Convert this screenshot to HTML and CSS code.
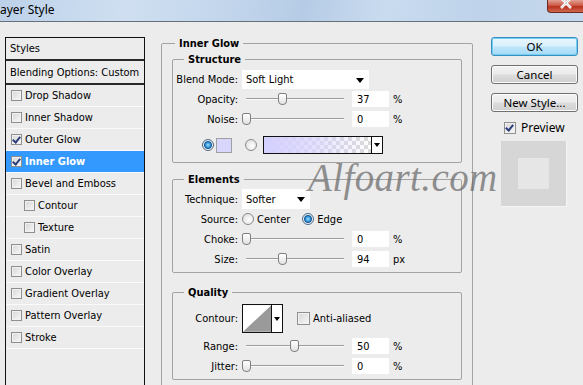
FILE: index.html
```html
<!DOCTYPE html>
<html lang="en">
<head>
    <meta charset="UTF-8">
    <title>Layer Style</title>
    <link rel="stylesheet" href="styles.css">
</head>
<body>
    <div class="window">
        <div class="titlebar">
            <span class="title">ayer Style</span>
            <span class="close">
                <svg width="12" height="9" viewBox="0 0 12 9"><path d="M1 -2 L11 8 M11 -2 L1 8" stroke="#fff" stroke-width="2.6"/><path d="M1 -2 L11 8 M11 -2 L1 8" stroke="#d8d8d8" stroke-width="1"/></svg>
            </span>
        </div>

        <div class="dialog">
            <div class="styles-panel">
                <div class="panel-head first">Styles</div>
                <div class="panel-head">Blending Options: Custom</div>
                <div class="style-item"><span class="cb"></span>Drop Shadow</div>
                <div class="style-item"><span class="cb"></span>Inner Shadow</div>
                <div class="style-item"><span class="cb checked"></span>Outer Glow</div>
                <div class="style-item active"><span class="cb checked"></span>Inner Glow</div>
                <div class="style-item"><span class="cb"></span>Bevel and Emboss</div>
                <div class="style-item sub"><span class="cb"></span>Contour</div>
                <div class="style-item sub"><span class="cb"></span>Texture</div>
                <div class="style-item"><span class="cb"></span>Satin</div>
                <div class="style-item"><span class="cb"></span>Color Overlay</div>
                <div class="style-item"><span class="cb"></span>Gradient Overlay</div>
                <div class="style-item"><span class="cb"></span>Pattern Overlay</div>
                <div class="style-item"><span class="cb"></span>Stroke</div>
            </div>

            <fieldset class="group outer">
                <legend>Inner Glow</legend>

                <fieldset class="group structure">
                    <legend>Structure</legend>
                    <div class="row tall">
                        <span class="label">Blend Mode:</span>
                        <div class="select wide">Soft Light<span class="arrow"></span></div>
                    </div>
                    <div class="row">
                        <span class="label">Opacity:</span>
                        <div class="slider"><span class="track"></span><span class="thumb" style="left: 36px"></span></div>
                        <span class="field">37</span><span class="unit">%</span>
                    </div>
                    <div class="row">
                        <span class="label">Noise:</span>
                        <div class="slider"><span class="track"></span><span class="thumb" style="left: 0px"></span></div>
                        <span class="field">0</span><span class="unit">%</span>
                    </div>
                    <div class="row color-row">
                        <span class="radio on"></span>
                        <span class="swatch"></span>
                        <span class="radio grad-radio"></span>
                        <div class="gradient-pick"><span class="grad"></span><span class="grad-arrow"><span class="arrow"></span></span></div>
                    </div>
                </fieldset>

                <fieldset class="group elements">
                    <legend>Elements</legend>
                    <div class="row tall">
                        <span class="label">Technique:</span>
                        <div class="select narrow">Softer<span class="arrow"></span></div>
                    </div>
                    <div class="row">
                        <span class="label">Source:</span>
                        <span class="radio"></span><span class="opt">Center</span>
                        <span class="radio on edge"></span><span class="opt">Edge</span>
                    </div>
                    <div class="row">
                        <span class="label">Choke:</span>
                        <div class="slider"><span class="track"></span><span class="thumb" style="left: 0px"></span></div>
                        <span class="field">0</span><span class="unit">%</span>
                    </div>
                    <div class="row">
                        <span class="label">Size:</span>
                        <div class="slider"><span class="track"></span><span class="thumb" style="left: 36px"></span></div>
                        <span class="field">94</span><span class="unit">px</span>
                    </div>
                </fieldset>

                <fieldset class="group quality">
                    <legend>Quality</legend>
                    <div class="row contour-row">
                        <span class="label">Contour:</span>
                        <div class="contour">
                            <svg width="29" height="27" viewBox="0 0 29 27"><rect width="29" height="27" fill="#fff"/><path d="M0 27 L29 0 L29 27 Z" fill="#9a9a9a"/></svg>
                            <span class="grad-arrow"><span class="arrow"></span></span>
                        </div>
                        <span class="cb aa"></span><span class="opt">Anti-aliased</span>
                    </div>
                    <div class="row">
                        <span class="label">Range:</span>
                        <div class="slider"><span class="track"></span><span class="thumb" style="left: 48px"></span></div>
                        <span class="field">50</span><span class="unit">%</span>
                    </div>
                    <div class="row">
                        <span class="label">Jitter:</span>
                        <div class="slider"><span class="track"></span><span class="thumb" style="left: 0px"></span></div>
                        <span class="field">0</span><span class="unit">%</span>
                    </div>
                </fieldset>
            </fieldset>

            <div class="actions">
                <button class="btn default">OK</button>
                <button class="btn">Cancel</button>
                <button class="btn">New Style...</button>
                <div class="preview-toggle"><span class="cb checked"></span>Preview</div>
                <div class="preview"><span class="preview-inner"></span></div>
            </div>
        </div>

        <div class="watermark">Alfoart.com</div>
    </div>
</body>
</html>
```

FILE: styles.css
```css
* {
    box-sizing: border-box;
}
html, body {
    margin: 0;
    height: 100%;
}
body {
    background: #ececec;
    font-family: "DejaVu Sans Condensed", "DejaVu Sans", sans-serif;
    font-size: 11px;
    line-height: 13px;
    color: #000;
    overflow: hidden;
}
.window {
    position: relative;
    height: 385px;
    overflow: hidden;
}

/* title bar */
.titlebar {
    height: 22px;
    display: flex;
    align-items: flex-start;
    border-bottom: 1px solid #66707a;
    background: linear-gradient(100deg, #bcd1e9 0%, #cfdff1 22%, #c3d6ec 38%, #b6cce6 52%, #c9dbef 66%, #bed3ea 82%, #c6d8ed 100%);
}
.title {
    padding-top: 2px;
    font-family: "Noto Sans", sans-serif;
    font-size: 12px;
    line-height: 16px;
}
.close {
    margin-left: auto;
    width: 36px;
    height: 13px;
    display: flex;
    justify-content: center;
    align-items: flex-start;
    border: 1px solid #6b2a22;
    border-top: none;
    border-right: none;
    border-radius: 0 0 0 4px;
    background: linear-gradient(#e0a195, #cf5a47 45%, #b8321f 55%, #d0684f);
}

/* dialog body */
.dialog {
    display: flex;
    align-items: flex-start;
    padding: 15px 0 0 5px;
}

/* styles list */
.styles-panel {
    flex: none;
    width: 140px;
    height: 348px;
    border: 1px solid #111;
    border-bottom: none;
}
.panel-head {
    height: 24px;
    padding: 5px 0 0 4px;
    border-bottom: 2px solid #2a2a2a;
}
.panel-head.first {
    height: 23px;
    padding-top: 4px;
}
.style-item {
    display: flex;
    align-items: center;
    height: 22px;
    padding-left: 5px;
    border-bottom: 1px solid #fafafa;
}
.style-item.sub {
    padding-left: 18px;
}
.style-item.active {
    background: #3399ff;
    color: #fff;
    font-weight: bold;
}
.style-item .cb {
    margin-right: 3px;
}

/* checkbox and radio */
.cb {
    flex: none;
    position: relative;
    width: 11px;
    height: 11px;
    border: 1px solid #8e8f8f;
    background: linear-gradient(135deg, #d6d6d6, #f8f8f8);
    box-shadow: inset 0 0 0 1px #f2f2f2;
}
.cb.checked::after {
    content: "";
    position: absolute;
    left: 2px;
    top: 0;
    width: 3px;
    height: 6px;
    border: solid #2c3f7a;
    border-width: 0 2px 2px 0;
    transform: rotate(40deg);
}
.radio {
    flex: none;
    width: 12px;
    height: 12px;
    border-radius: 50%;
    border: 1px solid #8a8a8a;
    background: radial-gradient(circle at 60% 60%, #ffffff, #d8d8d8);
}
.radio.on {
    border-color: #4a6b8a;
    background: radial-gradient(circle, #9fe3ff 0, #2b8fd6 2.5px, #175a95 3.5px, #f2f2f2 4.5px, #d8d8d8 6px);
}

/* group boxes */
.group {
    margin: 0;
    padding: 0;
    min-width: 0;
    border: 1px solid #a3a3a3;
    border-radius: 2px;
}
.group legend {
    padding: 0 4px;
    font-weight: bold;
    line-height: 13px;
}
.outer {
    flex: none;
    width: 312px;
    height: 360px;
    margin-left: 16px;
    padding: 3px 10px 0 10px;
}
.outer > legend {
    margin-left: 3px;
}
.structure, .elements, .quality {
    padding: 3px 0 8px 0;
}
.structure legend, .elements legend, .quality legend {
    margin-left: 11px;
}
.elements {
    margin-top: 10px;
    padding-bottom: 3px;
}
.quality {
    margin-top: 13px;
    padding-top: 5px;
    padding-bottom: 3px;
}

/* rows */
.row {
    display: flex;
    align-items: center;
    height: 20px;
}
.label {
    flex: none;
    width: 69px;
    padding-right: 4px;
    text-align: right;
}
.select {
    position: relative;
    height: 19px;
    padding: 3px 0 0 4px;
    background: #fff;
}
.select.wide {
    width: 127px;
}
.select.narrow {
    width: 68px;
    height: 20px;
    padding-top: 4px;
}
.arrow {
    display: inline-block;
    width: 0;
    height: 0;
    border-top: 5px solid #000;
    border-left: 4px solid transparent;
    border-right: 4px solid transparent;
}
.select .arrow {
    position: absolute;
    right: 5px;
    top: 8px;
}
.slider {
    position: relative;
    flex: none;
    width: 106px;
    height: 20px;
}
.track {
    position: absolute;
    left: 4px;
    right: 4px;
    top: 9px;
    height: 2px;
    border-top: 1px solid #9c9c9c;
    border-bottom: 1px solid #fbfbfb;
}
.thumb {
    position: absolute;
    top: 4px;
    width: 9px;
    height: 12px;
    border: 1px solid #7f7f7f;
    border-radius: 2px 2px 4px 4px;
    background: linear-gradient(#ffffff, #e2e2e2);
}
.field {
    flex: none;
    width: 37px;
    height: 16px;
    margin-left: 4px;
    padding: 2px 0 0 5px;
    background: #fff;
}
.unit {
    margin-left: 4px;
}

.color-row {
    height: 18px;
    margin-top: 7px;
    padding-left: 29px;
}
.swatch {
    width: 16px;
    height: 15px;
    margin-left: 2px;
    border: 1px solid #a0a0a0;
    background: #d9d6fd;
}
.grad-radio {
    margin-left: 13px;
}
.gradient-pick {
    display: flex;
    width: 120px;
    height: 18px;
    margin-left: 6px;
    border: 1px solid #111;
}
.grad {
    flex: 1;
    background:
        linear-gradient(to right, #d4d0ff, rgba(216, 212, 255, 0.75) 45%, rgba(216, 212, 255, 0)),
        repeating-conic-gradient(#d9d9d9 0 25%, #ffffff 0 50%) 0 0 / 8px 8px;
}
.grad-arrow {
    display: flex;
    align-items: center;
    justify-content: center;
    width: 11px;
    border-left: 1px solid #111;
    background: #fff;
}
.grad-arrow .arrow {
    border-top-width: 4px;
    border-left-width: 3px;
    border-right-width: 3px;
}

.opt {
    margin-left: 3px;
}
.edge {
    margin-left: 12px;
}

.contour-row {
    height: 29px;
    margin-bottom: 3px;
}
.contour {
    display: flex;
    width: 41px;
    height: 29px;
    border: 1px solid #111;
}
.contour svg {
    display: block;
}
.cb.aa {
    width: 13px;
    height: 13px;
    margin-left: 14px;
}

/* buttons */
.actions {
    flex: none;
    width: 87px;
    margin-left: 18px;
    font-family: "Noto Sans", sans-serif;
    font-size: 11.5px;
}
.btn {
    display: block;
    width: 87px;
    height: 19px;
    margin: 0 0 9px 0;
    padding: 0;
    border: 1px solid #707070;
    border-radius: 3px;
    background: linear-gradient(#f2f2f2, #ebebeb 48%, #dddddd 52%, #cfcfcf);
    box-shadow: inset 0 0 0 1px #fbfbfb;
    font-family: inherit;
    font-size: inherit;
    line-height: 16px;
    color: #000;
}
.btn.default {
    border-color: #3c8ec2;
    background: linear-gradient(#eaf6fd, #d9f0fc 48%, #bee6fd 52%, #a7d9f5);
    box-shadow: inset 0 0 0 1px #6fd0f0;
}
.preview-toggle {
    display: flex;
    align-items: center;
    gap: 5px;
    margin: 0 0 0 13px;
    height: 13px;
    font-size: 12px;
}
.preview-toggle .cb {
    width: 12px;
    height: 12px;
}
.preview {
    display: flex;
    align-items: center;
    justify-content: center;
    width: 66px;
    height: 66px;
    margin: 7px 0 0 10px;
    background: #d6d6d6;
    border-right: 1px solid #f4f4f4;
    border-bottom: 1px solid #f4f4f4;
}
.preview-inner {
    width: 31px;
    height: 31px;
    background: #e6e6e6;
}

/* watermark over the panel */
.watermark {
    position: absolute;
    left: 308px;
    top: 158px;
    font-family: "Liberation Serif", serif;
    font-style: italic;
    font-size: 39px;
    line-height: 40px;
    color: rgba(110, 110, 110, 0.75);
    letter-spacing: 0.4px;
}
```
